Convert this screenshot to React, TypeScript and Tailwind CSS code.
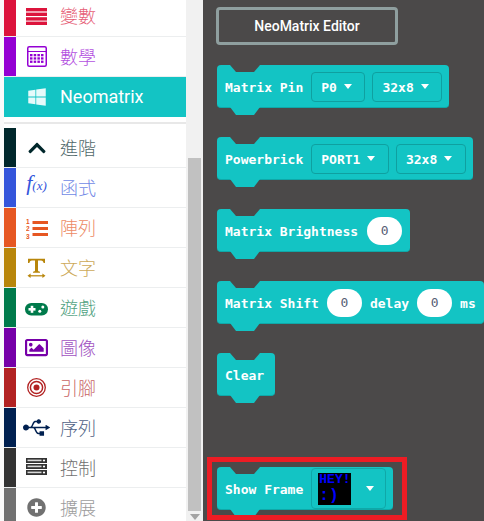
import React from "react";
import { FaWindows, FaChevronUp, FaRegImage, FaUsb, FaPlusCircle } from "react-icons/fa";

const VarIcon = ({ c }: { c: string }) => (
  <svg width="21" height="17" viewBox="0 0 21 17">
    <rect x="0" y="0" width="21" height="3.4" fill={c} />
    <rect x="0" y="4.6" width="21" height="3.4" fill={c} />
    <rect x="0" y="9.2" width="21" height="3.4" fill={c} />
    <rect x="0" y="13.6" width="21" height="3.4" fill={c} />
  </svg>
);

const CalcIcon = ({ c }: { c: string }) => (
  <svg width="20" height="21" viewBox="0 0 20 21">
    <rect x="0.75" y="0.75" width="18.5" height="19.5" rx="1.5" fill="none" stroke={c} strokeWidth="1.5" />
    <rect x="1" y="5" width="18" height="1" fill={c} />
    {[8, 11.3, 14.6].map((y) =>
      [3, 6.7, 10.4, 14].map((x) => <rect key={`${x}-${y}`} x={x} y={y} width="2.5" height="2.3" fill={c} />)
    )}
  </svg>
);

const ListIcon = ({ c }: { c: string }) => (
  <svg width="22" height="22" viewBox="0 0 22 22">
    <text x="0" y="6.5" fontSize="6.5" fontWeight="700" fontFamily="Liberation Sans, sans-serif" fill={c}>1</text>
    <text x="0" y="14" fontSize="6.5" fontWeight="700" fontFamily="Liberation Sans, sans-serif" fill={c}>2</text>
    <text x="0" y="21.5" fontSize="6.5" fontWeight="700" fontFamily="Liberation Sans, sans-serif" fill={c}>3</text>
    <rect x="6.5" y="4" width="15.5" height="3" fill={c} />
    <rect x="6.5" y="10" width="15.5" height="3" fill={c} />
    <rect x="6.5" y="16" width="15.5" height="3" fill={c} />
  </svg>
);

const TextIcon = ({ c }: { c: string }) => (
  <svg width="19" height="20" viewBox="0 0 19 20">
    <path d="M1 5V0.8H18V5H16.6C16.4 3.3 15.6 2.4 14 2.4H11V12.2C11 13.2 11.6 13.6 13 13.7V14.8H6V13.7C7.4 13.6 8 13.2 8 12.2V2.4H5C3.4 2.4 2.6 3.3 2.4 5Z" fill={c} />
    <rect x="3" y="17.2" width="13" height="1.2" fill={c} />
    <path d="M0.5 17.8L3.6 15.6V20ZM18.5 17.8L15.4 15.6V20Z" fill={c} />
  </svg>
);

const PadIcon = ({ c }: { c: string }) => (
  <svg className="mt-[3px]" width="23" height="13" viewBox="0 0 23 13">
    <rect x="0" y="0" width="23" height="12.5" rx="6.2" fill={c} />
    <rect x="3.5" y="5" width="7" height="2.6" fill="#fff" />
    <rect x="5.7" y="2.8" width="2.6" height="7" fill="#fff" />
    <circle cx="17.8" cy="4" r="1.5" fill="#fff" />
    <circle cx="14.8" cy="8.3" r="1.5" fill="#fff" />
  </svg>
);

const TargetIcon = ({ c }: { c: string }) => (
  <svg width="19" height="19" viewBox="0 0 19 19">
    <circle cx="9.5" cy="9.5" r="8.8" fill="none" stroke={c} strokeWidth="1.3" />
    <circle cx="9.5" cy="9.5" r="6.1" fill="none" stroke={c} strokeWidth="1.5" />
    <circle cx="9.5" cy="9.5" r="3" fill={c} />
  </svg>
);

const ServerIcon = ({ c }: { c: string }) => (
  <svg className="mb-[2px]" width="21" height="17" viewBox="0 0 21 17">
    {[0, 6, 12].map((y) => (
      <g key={y}>
        <rect x="0" y={y} width="21" height="5" fill={c} />
        <rect x="1.5" y={y + 1.6} width="14" height="1.6" fill="#d8d8d8" />
        <circle cx="18" cy={y + 2.5} r="1.1" fill="#fff" />
      </g>
    ))}
  </svg>
);

type Cat = { label: string; color: string; icon: React.ReactNode };

const top: Cat[] = [
  { label: "變數", color: "#dc143c", icon: <VarIcon c="#dc143c" /> },
  { label: "數學", color: "#9400d3", icon: <CalcIcon c="#9400d3" /> },
];

const bottom: Cat[] = [
  { label: "進階", color: "#00272b", icon: <FaChevronUp size={20} color="#00272b" /> },
  {
    label: "函式",
    color: "#3455db",
    icon: (
      <span className="pb-[9px] font-['Liberation_Serif',serif] italic leading-none text-[#3455db]">
        <span className="text-[22px]">f</span>
        <span className="text-[13px]">(x)</span>
      </span>
    ),
  },
  { label: "陣列", color: "#e65722", icon: <ListIcon c="#e65722" /> },
  { label: "文字", color: "#b8860b", icon: <TextIcon c="#b8860b" /> },
  { label: "遊戲", color: "#007a4b", icon: <PadIcon c="#007a4b" /> },
  { label: "圖像", color: "#7600a8", icon: <FaRegImage size={23} color="#7600a8" /> },
  { label: "引腳", color: "#b22222", icon: <TargetIcon c="#b22222" /> },
  { label: "序列", color: "#002050", icon: <FaUsb size={27} color="#002050" /> },
  { label: "控制", color: "#333333", icon: <ServerIcon c="#333333" /> },
  { label: "擴展", color: "#717171", icon: <FaPlusCircle size={19} color="#717171" /> },
];

function Row({ c, className = "" }: { c: Cat; className?: string }) {
  return (
    <div className={`flex h-[40px] shrink-0 items-center border-b border-[#eceeef] bg-white ${className}`}>
      <div className="h-full w-[12px] shrink-0" style={{ backgroundColor: c.color }} />
      <div className="flex w-[41px] shrink-0 items-center justify-center">{c.icon}</div>
      <span
        className="ml-[3px] pb-[2px] font-['Noto_Sans_CJK_TC',sans-serif] text-[18px] font-light leading-none opacity-70"
        style={{ color: c.color }}
      >
        {c.label}
      </span>
    </div>
  );
}

const Caret = () => (
  <span className="h-0 w-0 border-x-[4.5px] border-t-[5px] border-x-transparent border-t-white" />
);

function Drop({ label }: { label: string }) {
  return (
    <div className="flex h-[30px] items-center gap-[7px] rounded-[4px] border border-[#0fa0a0] pl-[9px] pr-[12.5px]">
      <span className="translate-y-[1px]">{label}</span>
      <Caret />
    </div>
  );
}

const Num = () => (
  <div className="flex h-[28px] w-[35px] items-center justify-center rounded-full bg-white font-normal text-[#575e75]">0</div>
);

function Label({ children, className = "mr-[1px]" }: { children: React.ReactNode; className?: string }) {
  return <span className={`translate-y-[1px] ${className}`}>{children}</span>;
}

function Block({ children, className = "" }: { children: React.ReactNode; className?: string }) {
  return (
    <div
      className={`relative ml-[1px] flex h-[43px] w-fit items-center gap-[7px] rounded-[4px] border-b border-[#0fa8a8] bg-[#13c4c4] pl-[8px] pr-[7px] pt-[1px] font-['DejaVu_Sans_Mono',monospace] text-[13px] font-bold whitespace-nowrap text-white ${className}`}
    >
      <div className="absolute left-[13px] top-0 h-[7px] w-[30px] bg-[#4b4949] [clip-path:polygon(0_0,100%_0,80%_100%,20%_100%)]" />
      <div className="absolute left-[13px] top-[42px] h-[8px] w-[30px] bg-[#13c4c4] [clip-path:polygon(0_0,100%_0,80%_100%,20%_100%)]" />
      {children}
    </div>
  );
}

export default function App() {
  return (
    <div className="flex h-[521px] w-[484px] overflow-hidden bg-[#4b4949]">
      <aside className="flex h-full w-[186px] shrink-0 flex-col overflow-hidden bg-[#fafafa] pl-[4px]">
        <Row c={top[0]} className="-mt-[4px] h-[41px]" />
        <Row c={top[1]} />
        <div className="flex h-[40px] shrink-0 items-center bg-[#13c4c4] pl-[12px] text-white">
          <div className="flex w-[41px] shrink-0 items-center justify-center">
            <FaWindows size={20} color="#e6fafa" />
          </div>
          <span className="ml-[3px] font-['Roboto',sans-serif] text-[18px] font-normal leading-none">Neomatrix</span>
        </div>
        <div className="h-[7px] shrink-0 border-b-2 border-[#e8e8e8] bg-white" />
        <div className="h-[4px] shrink-0 bg-white" />
        <div className="shrink-0">
          {bottom.map((c) => (
            <Row key={c.label} c={c} />
          ))}
        </div>
      </aside>

      <div className="relative flex h-full w-[17px] shrink-0 flex-col items-center bg-[#f1f1f1] pt-[158px]">
        <div className="h-[353px] w-[13px] bg-[#c1c1c1]" />
        <div className="mt-[3px] h-0 w-0 border-x-[5px] border-t-[6px] border-x-transparent border-t-[#a3a3a3]" />
      </div>

      <main className="flex min-w-0 flex-1 flex-col pl-[13px] pt-[7px]">
        <div className="mb-[20px] flex h-[38px] w-[182px] items-center justify-center rounded-[4px] border-[3px] border-[#8f9f9f] font-['Roboto',sans-serif] text-[14px] font-medium text-white">
          NeoMatrix Editor
        </div>

        <Block className="mb-[29px]">
          <Label>Matrix Pin</Label>
          <Drop label="P0" />
          <Drop label="32x8" />
        </Block>
        <Block className="mb-[29px]">
          <Label>Powerbrick</Label>
          <Drop label="PORT1" />
          <Drop label="32x8" />
        </Block>
        <Block className="mb-[29px] pr-[8px]">
          <Label className="mr-[2px]">Matrix Brightness</Label>
          <Num />
        </Block>
        <Block className="mb-[29px]">
          <Label>Matrix Shift</Label>
          <Num />
          <Label className="mx-[1px]">delay</Label>
          <Num />
          <Label className="mx-[1px]">ms</Label>
        </Block>
        <Block className="mb-[61px]">
          <Label className="mr-[4px]">Clear</Label>
        </Block>

        <div className="-ml-[9px] w-[200px] border-[5px] border-[#ed1c24]">
          <div className="h-[53px] overflow-hidden pl-[4px] pt-[5px]">
            <Block>
              <Label>Show Frame</Label>
              <div className="flex h-[41px] w-[75px] items-center rounded-[4px] border border-[#0fa8a8] pl-[6px]">
                <div className="flex h-[32px] w-[33px] flex-col items-start overflow-hidden bg-black pl-[1px] font-['Liberation_Mono',monospace] font-bold text-[#0000ff]">
                  <span className="-mt-[1px] text-[13px] leading-[15px]">HEY!</span>
                  <span className="text-[16px] leading-[18px]">:)</span>
                </div>
                <span className="ml-[15px] flex">
                  <Caret />
                </span>
              </div>
            </Block>
          </div>
        </div>
      </main>
    </div>
  );
}
